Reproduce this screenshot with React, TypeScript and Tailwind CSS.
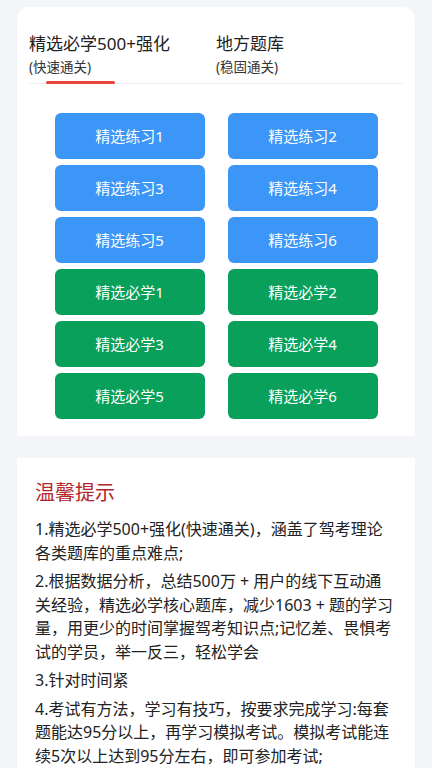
import React, { useState } from 'react';

const tabs = [
  { title: '精选必学500+强化', sub: '(快速通关)' },
  { title: '地方题库', sub: '(稳固通关)' },
];

const practice = ['精选练习1', '精选练习2', '精选练习3', '精选练习4', '精选练习5', '精选练习6'];
const must = ['精选必学1', '精选必学2', '精选必学3', '精选必学4', '精选必学5', '精选必学6'];

const tips = [
  '1.精选必学500+强化(快速通关)，涵盖了驾考理论各类题库的重点难点;',
  '2.根据数据分析，总结500万 + 用户的线下互动通关经验，精选必学核心题库，减少1603 + 题的学习量，用更少的时间掌握驾考知识点;记忆差、畏惧考试的学员，举一反三，轻松学会',
  '3.针对时间紧',
  '4.考试有方法，学习有技巧，按要求完成学习:每套题能达95分以上，再学习模拟考试。模拟考试能连续5次以上达到95分左右，即可参加考试;',
];

const App: React.FC = () => {
  const [active, setActive] = useState(0);

  return (
    <div
      className="min-h-[768px] bg-[#f4f5f9] px-[17px] pt-[7px]"
      style={{ fontFamily: '"Noto Sans", "Noto Sans CJK SC", sans-serif' }}
    >
      <div className="rounded-t-[12px] bg-white pb-[17px]">
        <div className="mx-[12px] flex border-b border-[#ececec] pt-[25px]">
          {tabs.map((tab, index) => (
            <button
              key={tab.title}
              type="button"
              onClick={() => setActive(index)}
              className={`-mb-[1px] flex flex-col items-start text-left ${index === 0 ? 'w-[187px]' : ''}`}
            >
              <span className="text-[17px] leading-[24px] text-[#222]">{tab.title}</span>
              <span className="mt-[1px] text-[13.5px] leading-[20px] text-[#333]">{tab.sub}</span>
              <span
                className={`ml-[17px] mt-[4px] h-[3px] w-[69px] rounded-full ${
                  active === index ? 'bg-[#e8453c]' : 'bg-transparent'
                }`}
              />
            </button>
          ))}
        </div>

        <div className="mx-auto mt-[29px] grid w-[323px] grid-cols-2 gap-x-[23px] gap-y-[6px]">
          {practice.map((label) => (
            <button
              key={label}
              type="button"
              className="h-[46px] rounded-[6px] bg-[#3b96f8] text-[15px] text-white"
            >
              {label}
            </button>
          ))}
          {must.map((label) => (
            <button
              key={label}
              type="button"
              className="h-[46px] rounded-[6px] bg-[#08a05a] text-[15px] text-white"
            >
              {label}
            </button>
          ))}
        </div>
      </div>

      <div className="mt-[22px] bg-white px-[18px] pt-[20px] pb-6">
        <h2 className="text-[20px] leading-[30px] text-[#b3262a]">温馨提示</h2>
        <div className="mt-[10px] flex flex-col gap-[5px]">
          {tips.map((tip) => (
            <p key={tip} className="text-[16px] leading-[23.5px] text-[#222]">
              {tip}
            </p>
          ))}
        </div>
      </div>
    </div>
  );
};

export default App;
